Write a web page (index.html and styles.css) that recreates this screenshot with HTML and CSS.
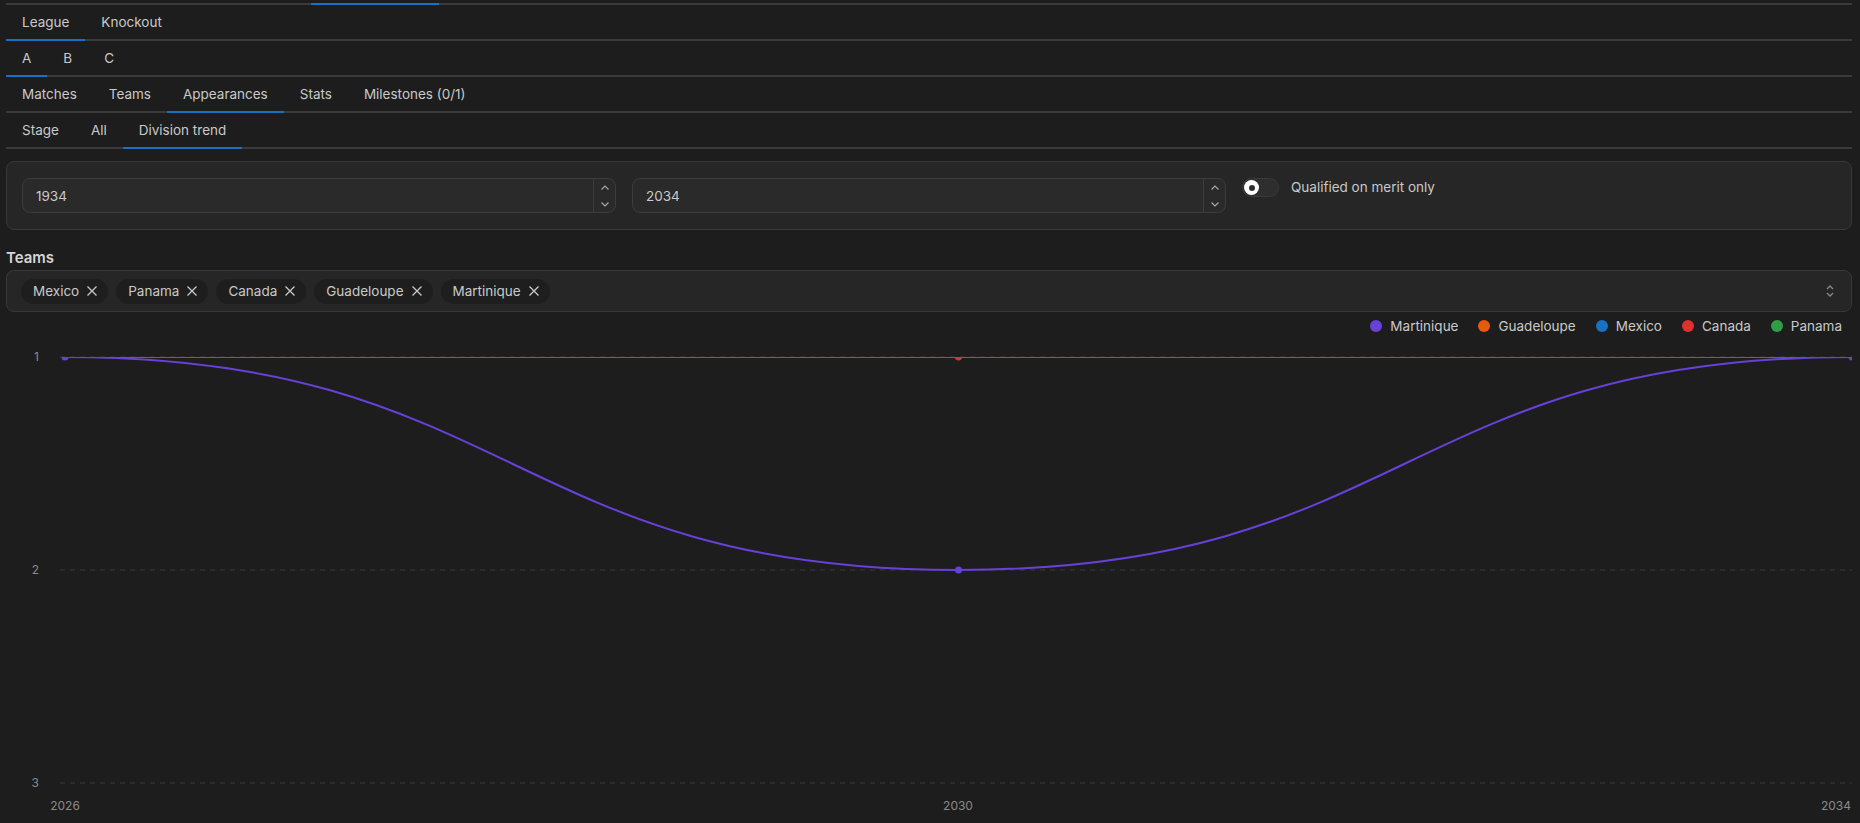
FILE: index.html
```html
<!DOCTYPE html>
<html>
<head>
  <meta charset="UTF-8" />
  <title>Division trend</title>
  <link rel="stylesheet" href="styles.css">
</head>
<body>
  <div class="page">
    <div class="scrolled-tabs"><span class="scrolled-active"></span></div>

    <div class="tabs">
      <span class="tab active">League</span>
      <span class="tab">Knockout</span>
    </div>
    <div class="tabs">
      <span class="tab active">A</span>
      <span class="tab">B</span>
      <span class="tab">C</span>
    </div>
    <div class="tabs">
      <span class="tab">Matches</span>
      <span class="tab">Teams</span>
      <span class="tab active">Appearances</span>
      <span class="tab">Stats</span>
      <span class="tab">Milestones (0/1)</span>
    </div>
    <div class="tabs">
      <span class="tab">Stage</span>
      <span class="tab">All</span>
      <span class="tab active">Division trend</span>
    </div>

    <div class="filters">
      <div class="number-input">
        <span class="number-value">1934</span>
        <span class="spin">
          <svg width="10" height="7" viewBox="0 0 10 7"><path d="M1.5 5.5 L5 2 L8.5 5.5" /></svg>
          <svg width="10" height="7" viewBox="0 0 10 7"><path d="M1.5 1.5 L5 5 L8.5 1.5" /></svg>
        </span>
      </div>
      <div class="number-input">
        <span class="number-value">2034</span>
        <span class="spin">
          <svg width="10" height="7" viewBox="0 0 10 7"><path d="M1.5 5.5 L5 2 L8.5 5.5" /></svg>
          <svg width="10" height="7" viewBox="0 0 10 7"><path d="M1.5 1.5 L5 5 L8.5 1.5" /></svg>
        </span>
      </div>
      <label class="switch">
        <span class="track"><span class="thumb"></span></span>
        <span class="switch-label">Qualified on merit only</span>
      </label>
    </div>

    <div class="field-label">Teams</div>
    <div class="multi">
      <span class="chip">Mexico <svg width="12" height="12" viewBox="0 0 12 12"><path d="M1.5 1.5 L10.5 10.5 M10.5 1.5 L1.5 10.5" /></svg></span>
      <span class="chip">Panama <svg width="12" height="12" viewBox="0 0 12 12"><path d="M1.5 1.5 L10.5 10.5 M10.5 1.5 L1.5 10.5" /></svg></span>
      <span class="chip">Canada <svg width="12" height="12" viewBox="0 0 12 12"><path d="M1.5 1.5 L10.5 10.5 M10.5 1.5 L1.5 10.5" /></svg></span>
      <span class="chip">Guadeloupe <svg width="12" height="12" viewBox="0 0 12 12"><path d="M1.5 1.5 L10.5 10.5 M10.5 1.5 L1.5 10.5" /></svg></span>
      <span class="chip">Martinique <svg width="12" height="12" viewBox="0 0 12 12"><path d="M1.5 1.5 L10.5 10.5 M10.5 1.5 L1.5 10.5" /></svg></span>
      <svg class="selector" width="14" height="16" viewBox="0 0 14 16"><path d="M4 6 L7 3 L10 6 M4 10 L7 13 L10 10" /></svg>
    </div>

    <div class="legend">
      <span class="legend-item"><span class="dot martinique"></span>Martinique</span>
      <span class="legend-item"><span class="dot guadeloupe"></span>Guadeloupe</span>
      <span class="legend-item"><span class="dot mexico"></span>Mexico</span>
      <span class="legend-item"><span class="dot canada"></span>Canada</span>
      <span class="legend-item"><span class="dot panama"></span>Panama</span>
    </div>

    <svg class="chart" width="1846" height="487" viewBox="0 0 1846 487">
      <defs>
        <clipPath id="plot">
          <rect x="54" y="21" width="1800" height="460" />
        </clipPath>
      </defs>

      <!-- grid -->
      <g class="grid">
        <line x1="54" y1="21" x2="1846" y2="21" />
        <line x1="54" y1="234" x2="1846" y2="234" />
        <line x1="54" y1="447" x2="1846" y2="447" />
      </g>

      <g class="ticks">
        <text x="33" y="25" text-anchor="end">1</text>
        <text x="33" y="238" text-anchor="end">2</text>
        <text x="33" y="451" text-anchor="end">3</text>
        <text x="59" y="474" text-anchor="middle">2026</text>
        <text x="952" y="474" text-anchor="middle">2030</text>
        <text x="1845" y="474" text-anchor="end">2034</text>
      </g>

      <g clip-path="url(#plot)">
        <path class="line" stroke="#2f9e44" d="M59 21 L1846 21" />
        <path class="line" stroke="#1971c2" d="M59 21 L1846 21" />
        <path class="line" stroke="#e8590c" d="M59 21 L1846 21" />
        <path class="line" stroke="#e03131" d="M59 21 L1846 21" />
        <circle cx="952.5" cy="21" r="3.5" fill="#e03131" />

        <path class="line" stroke="#6741d9" d="M59 21 C505.75 21 505.75 234 952.5 234 C1399.25 234 1399.25 21 1846 21" />
        <circle cx="59" cy="21" r="3.5" fill="#6741d9" />
        <circle cx="952.5" cy="234" r="3.5" fill="#6741d9" />
        <circle cx="1846" cy="21" r="3.5" fill="#6741d9" />
      </g>
    </svg>
  </div>
</body>
</html>
```

FILE: styles.css
```css
body {
  margin: 0;
  background-color: #1d1d1d;
  color: #c9c9c9;
  font-family: Inter, "Noto Sans", sans-serif;
  font-size: 13.5px;
  overflow: hidden;
}

.page {
  height: 823px;
  padding: 0 8px 0 6px;
}

.scrolled-tabs {
  display: flex;
  height: 5px;
  box-sizing: border-box;
  border-bottom: 2px solid #3a3a3a;
}

.scrolled-active {
  margin-left: 305px;
  width: 128px;
  margin-bottom: -2px;
  border-bottom: 2px solid #1971c2;
}

.tabs {
  display: flex;
  height: 36px;
  box-sizing: border-box;
  border-bottom: 2px solid #3a3a3a;
}

.tab {
  display: flex;
  align-items: center;
  height: 35px;
  box-sizing: border-box;
  padding: 0 16px;
  margin-bottom: -2px;
  border-bottom: 2px solid transparent;
  color: #c9c9c9;
}

.tabs .tab {
  height: 36px;
  padding-bottom: 1px;
}

.tab.active {
  border-bottom-color: #1971c2;
}

.filters {
  display: grid;
  grid-template-columns: 1fr 1fr 1fr;
  gap: 16px;
  margin-top: 12px;
  padding: 16px 15px;
  border: 1px solid #383838;
  border-radius: 8px;
  background-color: #262626;
}

.number-input {
  display: flex;
  align-items: center;
  height: 35px;
  box-sizing: border-box;
  border: 1px solid #3c3c3c;
  border-radius: 8px;
  background-color: #2a2a2a;
}

.number-value {
  flex: 1;
  padding-left: 13px;
  color: #c9c9c9;
}

.spin {
  display: flex;
  flex-direction: column;
  justify-content: center;
  align-items: center;
  gap: 10px;
  width: 21px;
  height: 100%;
  border-left: 1px solid #3c3c3c;
}

.spin svg path {
  fill: none;
  stroke: #a8a8a8;
  stroke-width: 1.2;
}

.switch {
  display: flex;
  align-items: flex-start;
  gap: 12px;
}

.track {
  display: flex;
  align-items: center;
  width: 37px;
  height: 19px;
  box-sizing: border-box;
  border: 1px solid #3a3a3a;
  border-radius: 10px;
  background-color: #2e2e2e;
}

.thumb {
  display: flex;
  align-items: center;
  justify-content: center;
  width: 15px;
  height: 15px;
  margin-left: 1px;
  border-radius: 50%;
  background-color: #ffffff;
}

.thumb::after {
  content: "";
  width: 6px;
  height: 6px;
  border-radius: 50%;
  background-color: #2e2e2e;
}

.switch-label {
  line-height: 19px;
}

.field-label {
  margin-top: 18px;
  line-height: 20px;
  font-size: 15px;
  font-weight: 600;
  color: #d6d6d6;
}

.multi {
  display: flex;
  align-items: center;
  gap: 8px;
  height: 42px;
  box-sizing: border-box;
  margin-top: 2px;
  padding: 0 14px 0 14px;
  border: 1px solid #383838;
  border-radius: 8px;
  background-color: #262626;
}

.chip {
  display: flex;
  align-items: center;
  gap: 7px;
  height: 25px;
  padding: 0 10px 0 12px;
  border-radius: 13px;
  background-color: #1e1e1e;
  color: #c9c9c9;
}

.chip svg path {
  fill: none;
  stroke: #c9c9c9;
  stroke-width: 1.3;
}

.selector {
  margin-left: auto;
}

.selector path {
  fill: none;
  stroke: #8a8a8a;
  stroke-width: 1.3;
}

.legend {
  display: flex;
  justify-content: flex-end;
  gap: 20px;
  height: 20px;
  margin-top: 4px;
  padding-right: 10px;
}

.legend-item {
  display: flex;
  align-items: center;
  gap: 8px;
  color: #c9c9c9;
}

.dot {
  width: 12px;
  height: 12px;
  border-radius: 50%;
}

.martinique { background-color: #6741d9; }
.guadeloupe { background-color: #e8590c; }
.mexico { background-color: #1971c2; }
.canada { background-color: #e03131; }
.panama { background-color: #2f9e44; }

.chart {
  display: block;
}

.grid line {
  stroke: #3a3a3a;
  stroke-width: 1;
  stroke-dasharray: 5 5;
}

.ticks text {
  fill: #8a8a8a;
  font-family: Inter, "Noto Sans", sans-serif;
  font-size: 12px;
}

.line {
  fill: none;
  stroke-width: 2;
}
```
